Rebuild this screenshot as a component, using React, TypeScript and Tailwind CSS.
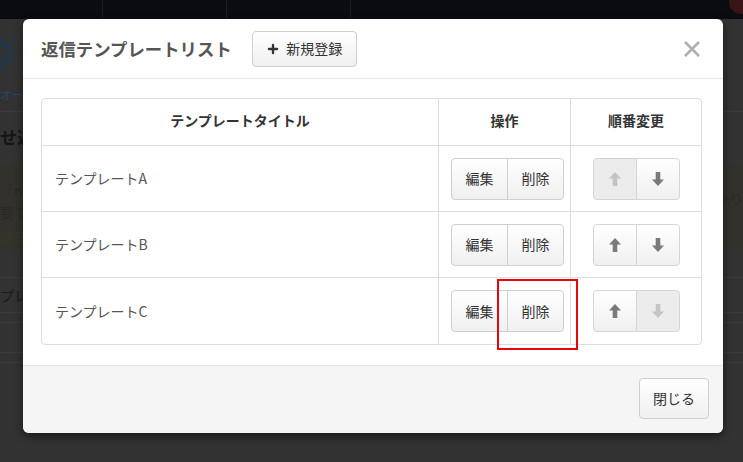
import { Plus } from "lucide-react";

const rows = [
  { title: "テンプレートA", upDisabled: true, downDisabled: false },
  { title: "テンプレートB", upDisabled: false, downDisabled: false },
  { title: "テンプレートC", upDisabled: false, downDisabled: true },
];

const btn =
  "border border-[#cfcfcf] bg-linear-to-b from-white to-[#f0f0f0] text-[#333] text-[14px]";

function Arrow({ down, disabled }: { down?: boolean; disabled?: boolean }) {
  return (
    <svg
      width="12"
      height="14"
      viewBox="0 0 12 14"
      className={down ? "rotate-180" : ""}
      fill={disabled ? "#c4c4c4" : "#7a7a7a"}
    >
      <path d="M6 0 L12 6.5 H8.3 V14 H3.7 V6.5 H0 Z" />
    </svg>
  );
}

function BackgroundPage() {
  return (
    <div className="flex h-full flex-col text-[#1c1c1c]">
      {/* Top nav */}
      <div className="relative flex h-[19px] shrink-0 bg-[#0b0c10]">
        <div className="w-[103px] border-r border-[#1c1d22]" />
        <div className="w-[124px] border-r border-[#1c1d22]" />
        <div className="w-[124px] border-r border-[#1c1d22]" />
        <div className="absolute -top-[10px] right-[-10px] h-[24px] w-[24px] rounded-full bg-[#3a1517]" />
      </div>

      {/* Header area */}
      <div className="flex h-[93px] flex-col border-b border-[#3b3b3b] pt-[14px]">
        <svg width="40" height="40" viewBox="0 0 40 40" className="-ml-[18px]">
          <circle cx="20" cy="20" r="8" fill="none" stroke="#1d3850" strokeWidth="2.5" />
          <path
            d="M20 4 v6 M20 30 v6 M4 20 h6 M30 20 h6 M8.5 8.5 l4 4 M27.5 27.5 l4 4 M8.5 31.5 l4 -4 M27.5 12.5 l4 -4"
            stroke="#1d3850"
            strokeWidth="2.5"
          />
        </svg>
        <div className="mt-[16px] text-[12px] leading-none text-[#24476a]">オー</div>
      </div>

      {/* Section title */}
      <div className="flex h-[50px] items-center text-[17px] font-bold text-[#151515]">
        せ返信
      </div>

      {/* Notice */}
      <div className="mt-[3px] flex h-[85px] justify-between bg-[#33312b] pt-[14px] text-[14px] leading-[22px] text-[#2b2924]">
        <div>
          <div>「nc</div>
          <div>要で</div>
          <div className="mt-[2px] text-[#3a3526]">迷惑</div>
        </div>
        <div className="pt-[8px]">かり</div>
      </div>

      <div className="h-[27px]" />
      <div className="flex h-[36px] items-center border-y border-[#3b3b3b] text-[14px] text-[#1c1c1c]">
        プレ
      </div>
      <div className="h-[10px] border-b border-[#3b3b3b]" />
      <div className="h-[30px] border-b border-[#3b3b3b]" />
      <div className="h-[10px] border-b border-[#3b3b3b]" />
    </div>
  );
}

export default function App() {
  return (
    <div
      className="relative h-[462px] w-full overflow-hidden bg-[#323232]"
      style={{ fontFamily: '"Noto Sans CJK JP", "Noto Sans", sans-serif' }}
    >
      <BackgroundPage />

      {/* Modal */}
      <div className="absolute left-[23px] top-[19px] flex h-[414px] w-[700px] flex-col rounded-[6px] bg-white shadow-[0_3px_9px_rgba(0,0,0,0.5)]">
        {/* Header */}
        <div className="flex h-[60px] shrink-0 items-center border-b border-[#e5e5e5] pl-[18px] pr-[22px]">
          <h4 className="text-[17.4px] font-bold leading-none text-[#555]">
            返信テンプレートリスト
          </h4>
          <button
            className={`${btn} ml-[20px] flex h-[36px] w-[105px] items-center justify-center gap-[6px] rounded-[4px]`}
          >
            <Plus size={14} strokeWidth={4} className="text-[#333]" />
            新規登録
          </button>
          <button className="ml-auto">
            <svg width="18" height="18" viewBox="0 0 18 18">
              <path d="M2 2 L16 16 M16 2 L2 16" stroke="#b0b0b0" strokeWidth="2.6" />
            </svg>
          </button>
        </div>

        {/* Body */}
        <div className="pb-[20px] pl-[18px] pr-[21px] pt-[19px]">
          <div className="overflow-hidden rounded-[4px] border border-[#ddd]">
            <div className="grid h-[47px] grid-cols-[396px_132px_1fr] border-b border-[#ddd] text-[14px] font-bold text-[#333]">
              <div className="flex items-center justify-center pb-[4px]">テンプレートタイトル</div>
              <div className="flex items-center justify-center border-l border-[#ddd] pb-[4px]">操作</div>
              <div className="flex items-center justify-center border-l border-[#ddd] pb-[4px]">順番変更</div>
            </div>
            {rows.map((r, i) => (
              <div
                key={r.title}
                className={`grid h-[66px] grid-cols-[396px_132px_1fr] text-[14px] ${
                  i < rows.length - 1 ? "border-b border-[#ddd]" : ""
                }`}
              >
                <div className="flex items-center pl-[13px] text-[#555]">{r.title}</div>
                <div className="flex items-center border-l border-[#ddd] pl-[12px]">
                  <div className="flex">
                    <button className={`${btn} h-[42px] w-[57px] rounded-l-[4px]`}>編集</button>
                    <button className={`${btn} -ml-px h-[42px] w-[57px] rounded-r-[4px]`}>削除</button>
                  </div>
                </div>
                <div className="flex items-center justify-center border-l border-[#ddd]">
                  <div className="flex">
                    <button
                      className={`flex h-[42px] w-[44px] items-center justify-center rounded-l-[4px] border border-[#d5d5d5] ${
                        r.upDisabled ? "bg-[#ececec]" : "bg-linear-to-b from-white to-[#f0f0f0]"
                      }`}
                    >
                      <Arrow disabled={r.upDisabled} />
                    </button>
                    <button
                      className={`-ml-px flex h-[42px] w-[44px] items-center justify-center rounded-r-[4px] border border-[#d5d5d5] ${
                        r.downDisabled ? "bg-[#ececec]" : "bg-linear-to-b from-white to-[#f0f0f0]"
                      }`}
                    >
                      <Arrow down disabled={r.downDisabled} />
                    </button>
                  </div>
                </div>
              </div>
            ))}
          </div>
        </div>

        {/* Footer */}
        <div className="flex flex-1 items-start justify-end rounded-b-[6px] border-t border-[#e5e5e5] bg-[#f5f5f5] pr-[14px] pt-[12px]">
          <button className={`${btn} h-[41px] w-[70px] rounded-[4px]`}>閉じる</button>
        </div>
      </div>

      {/* Highlight */}
      <div className="absolute left-[497px] top-[279px] h-[71px] w-[81px] border-2 border-[#e8060b]" />
    </div>
  );
}
